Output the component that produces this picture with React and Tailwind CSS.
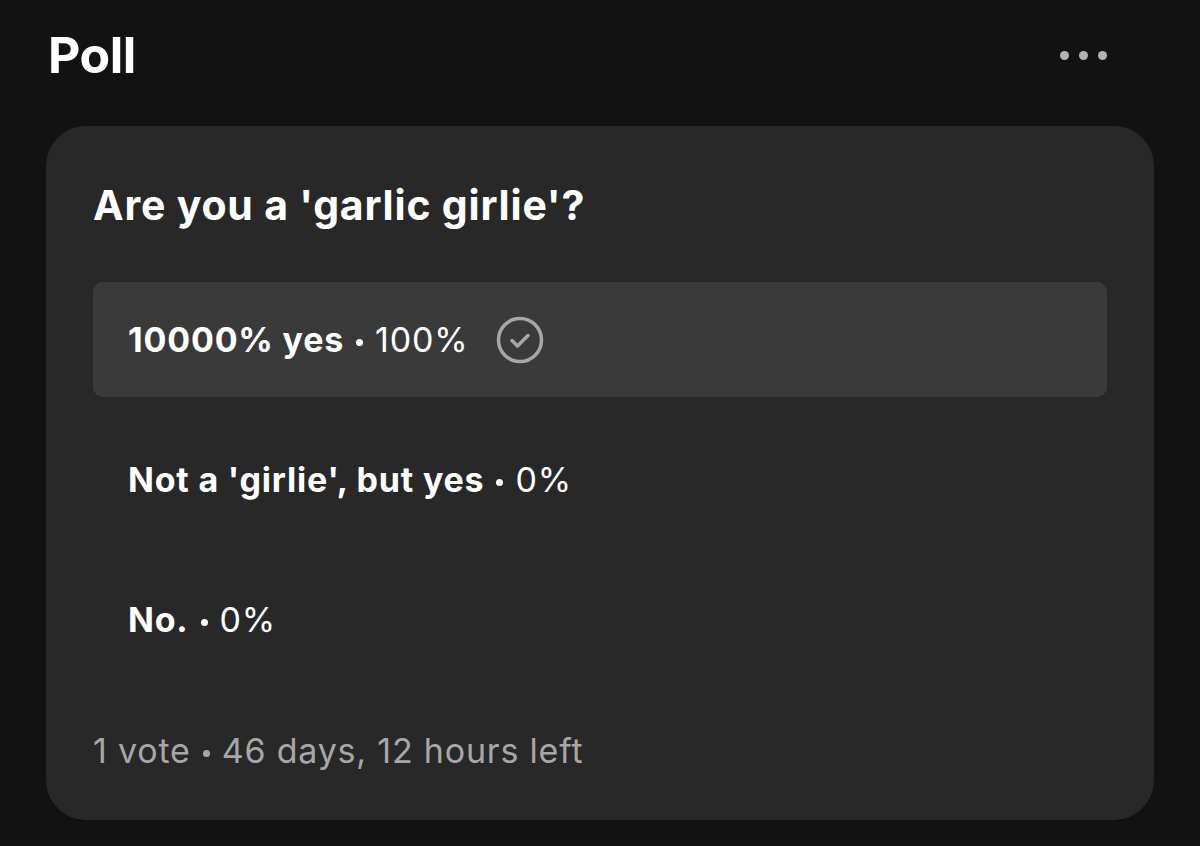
import React from 'react'

const options = [
  { label: '10000% yes', pct: '100%', voted: true },
  { label: "Not a 'girlie', but yes", pct: '0%', voted: false },
  { label: 'No.', pct: '0%', voted: false },
]

const CheckCircle = () => (
  <svg width="48" height="48" viewBox="0 0 48 48" fill="none">
    <circle cx="24" cy="24" r="21.5" stroke="#a7a7a7" strokeWidth="3.5" />
    <path d="M16 24.5l5.5 5.5L32 19.5" stroke="#a7a7a7" strokeWidth="3.5" strokeLinecap="round" strokeLinejoin="round" />
  </svg>
)

const Dot = () => <span className="w-[7px] h-[7px] rounded-full bg-current mx-[12px] mt-[5px] shrink-0" />

export default function App() {
  return (
    <div className="w-[1200px] h-[846px] bg-[#121212] text-white overflow-hidden" style={{ fontFamily: 'Inter, "Noto Sans", sans-serif' }}>
      <div className="flex items-center justify-between pl-[48px] pr-[93px] h-[116px] pb-[6px]">
        <h1 className="text-[50px] font-bold tracking-[-0.5px]">Poll</h1>
        <div className="flex gap-[10px]">
          <span className="w-[9px] h-[9px] rounded-full bg-[#b3b3b3]" />
          <span className="w-[9px] h-[9px] rounded-full bg-[#b3b3b3]" />
          <span className="w-[9px] h-[9px] rounded-full bg-[#b3b3b3]" />
        </div>
      </div>
      <div className="mx-[46px] mt-[10px] h-[694px] bg-[#282828] rounded-[40px] px-[47px] pt-[55px]">
        <h2 className="text-[41px] font-bold tracking-[0.8px] leading-[48px]">Are you a 'garlic girlie'?</h2>
        <div className="mt-[53px] flex flex-col gap-[25px]">
          {options.map((o) => (
            <div key={o.label} className={`h-[115px] rounded-[10px] px-[35px] flex items-center text-[34px] ${o.voted ? 'bg-[#3a3a3a]' : ''}`}>
              <span className="font-bold tracking-[0.8px]">{o.label}</span>
              <Dot />
              <span className="tracking-[0.8px]">{o.pct}</span>
              {o.voted && <span className="ml-[28px] flex"><CheckCircle /></span>}
            </div>
          ))}
        </div>
        <p className="mt-[48px] flex items-center text-[34px] text-[#a7a7a7] tracking-[0.8px]">
          1 vote<Dot />46 days, 12 hours left
        </p>
      </div>
    </div>
  )
}
